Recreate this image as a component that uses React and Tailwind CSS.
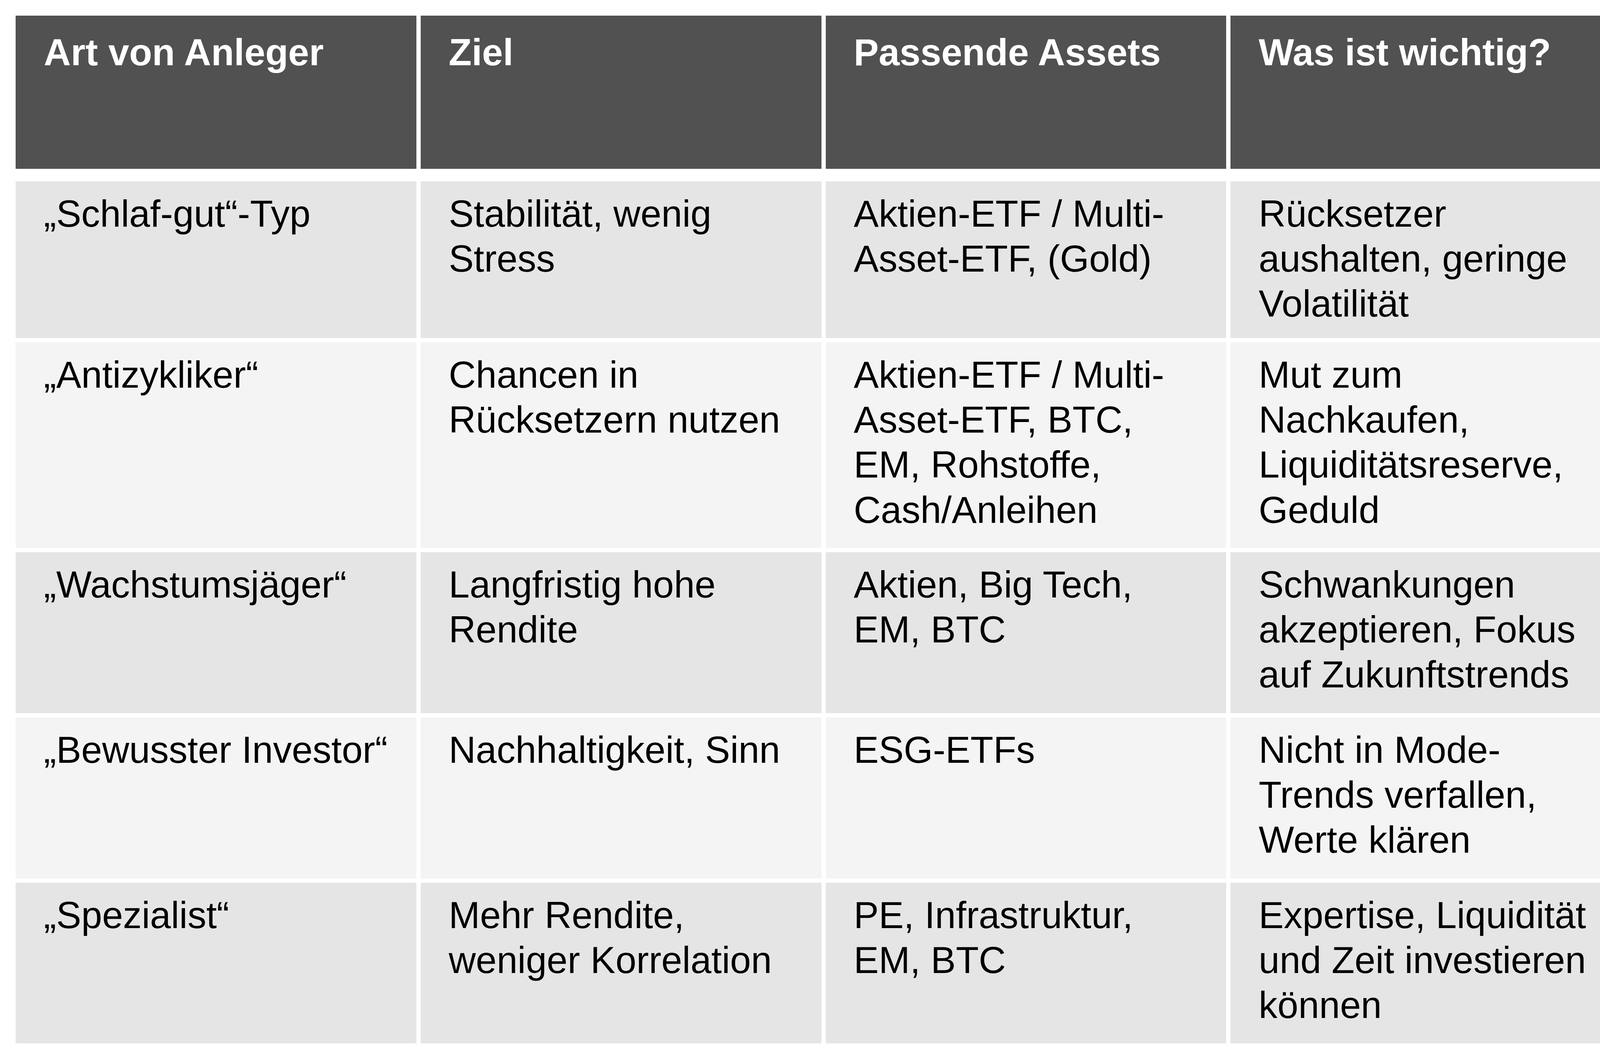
const headers = ["Art von Anleger", "Ziel", "Passende Assets", "Was ist wichtig?"];

const rows = [
  {
    h: "h-[401px]",
    bg: "bg-[#e5e5e5]",
    cells: [
      "„Schlaf-gut“-Typ",
      "Stabilität, wenig Stress",
      "Aktien-ETF / Multi-Asset-ETF, (Gold)",
      "Rücksetzer aushalten, geringe Volatilität",
    ],
  },
  {
    h: "h-[526px]",
    bg: "bg-[#f4f4f4]",
    cells: [
      "„Antizykliker“",
      "Chancen in Rücksetzern nutzen",
      "Aktien-ETF / Multi-Asset-ETF, BTC, EM, Rohstoffe, Cash/Anleihen",
      "Mut zum Nachkaufen, Liquiditätsreserve, Geduld",
    ],
  },
  {
    h: "h-[412px]",
    bg: "bg-[#e5e5e5]",
    cells: [
      "„Wachstumsjäger“",
      "Langfristig hohe Rendite",
      "Aktien, Big Tech, EM, BTC",
      "Schwankungen akzeptieren, Fokus auf Zukunftstrends",
    ],
  },
  {
    h: "h-[412px]",
    bg: "bg-[#f4f4f4]",
    cells: [
      "„Bewusster Investor“",
      "Nachhaltigkeit, Sinn",
      "ESG-ETFs",
      "Nicht in Mode-Trends verfallen, Werte klären",
    ],
  },
  {
    h: "h-[411px]",
    bg: "bg-[#e5e5e5]",
    cells: [
      "„Spezialist“",
      "Mehr Rendite, weniger Korrelation",
      "PE, Infrastruktur, EM, BTC",
      "Expertise, Liquidität und Zeit investieren können",
    ],
  },
];

export default function App() {
  return (
    <div className="min-h-screen bg-white pt-[40px] pl-[40px] font-['Liberation_Sans',Arial,sans-serif] text-[96px] leading-[115.2px]">
      <div className="w-[4136px]">
        <div className="grid grid-cols-4 gap-x-[11px] mb-[32px]">
          {headers.map((h) => (
            <div
              key={h}
              className="h-[392px] bg-[#515151] pt-[36px] pl-[72px] pr-[48px] font-bold text-white"
            >
              {h}
            </div>
          ))}
        </div>

        <div className="flex flex-col gap-y-[11px]">
          {rows.map((r, i) => (
            <div key={i} className="grid grid-cols-4 gap-x-[11px]">
              {r.cells.map((c, j) => (
                <div key={j} className={`${r.h} ${r.bg} pt-[25px] pl-[72px] pr-[48px] text-black`}>
                  {c}
                </div>
              ))}
            </div>
          ))}
        </div>
      </div>
    </div>
  );
}
